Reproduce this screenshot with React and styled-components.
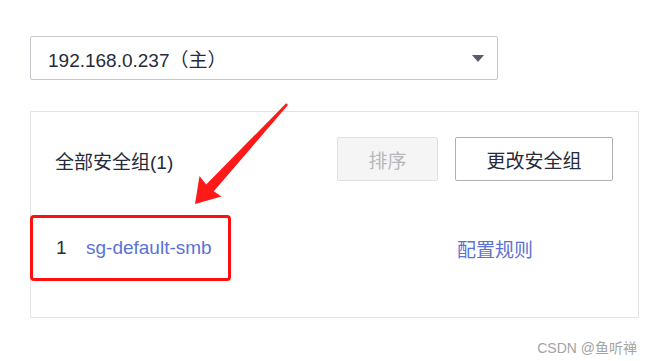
import React from 'react'
import styled, { createGlobalStyle } from 'styled-components'

const GlobalStyle = createGlobalStyle`
  body {
    margin: 0;
    background: #ffffff;
    font-family: "Liberation Sans", "Noto Sans CJK SC", sans-serif;
  }
`

const Page = styled.div`
  position: relative;
  width: 653px;
  height: 361px;
  box-sizing: border-box;
  padding: 36px 0 0 30px;
  overflow: hidden;
`

const Select = styled.div`
  width: 468px;
  height: 44px;
  box-sizing: border-box;
  border: 1px solid #c4c6cb;
  border-radius: 2px;
  display: flex;
  align-items: center;
  justify-content: space-between;
  padding: 0 13px 0 17px;
  font-size: 19px;
  color: #252b3a;
`

const Panel = styled.div`
  margin-top: 31px;
  width: 609px;
  height: 207px;
  box-sizing: border-box;
  border: 1px solid #e2e4e8;
`

const Header = styled.div`
  display: flex;
  align-items: center;
  gap: 17px;
  padding: 25px 25px 0 24px;
`

const Title = styled.div`
  flex: 1;
  font-size: 19px;
  color: #252b3a;
  padding-top: 2px;
`

const Button = styled.button`
  width: ${p => p.$w}px;
  height: 44px;
  box-sizing: border-box;
  border-radius: 2px;
  font-family: inherit;
  font-size: 19px;
  padding: 0;
  border: 1px solid ${p => (p.disabled ? '#dfe1e6' : '#adb0b8')};
  background: ${p => (p.disabled ? '#f5f5f6' : '#ffffff')};
  color: ${p => (p.disabled ? '#b6b8bd' : '#252b3a')};
`

const Row = styled.div`
  position: relative;
  margin-top: 34px;
  height: 66px;
  display: grid;
  grid-template-columns: 30px 371px auto;
  align-items: center;
  padding-left: 25px;
  font-size: 19px;
`

const Index = styled.span`
  color: #252b3a;
`

const Link = styled.span`
  color: #5a72d6;
`

const Highlight = styled.div`
  position: absolute;
  left: -1px;
  top: 0;
  width: 201px;
  height: 66px;
  box-sizing: border-box;
  border: 3px solid #ff1010;
  border-radius: 4px;
`

const Arrow = styled.svg`
  position: absolute;
  left: 0;
  top: 0;
  pointer-events: none;
`

const Footer = styled.div`
  margin-top: 19px;
  width: 607px;
  text-align: right;
  font-size: 14px;
  color: #a3a3a3;
`

export default function App() {
  return (
    <>
      <GlobalStyle />
      <Page>
        <Select>
          <span>192.168.0.237（主）</span>
          <svg width="12" height="7" viewBox="0 0 12 7">
            <path d="M0 0 L12 0 L6 7 Z" fill="#575d6c" />
          </svg>
        </Select>
        <Panel>
          <Header>
            <Title>全部安全组(1)</Title>
            <Button $w={101} disabled>排序</Button>
            <Button $w={158}>更改安全组</Button>
          </Header>
          <Row>
            <Index>1</Index>
            <Link>sg-default-smb</Link>
            <Link>配置规则</Link>
            <Highlight />
          </Row>
        </Panel>
        <Footer>CSDN @鱼听禅</Footer>
        <Arrow width="653" height="361" viewBox="0 0 653 361">
          <polygon
            points="288,105 213.8,191.2 221.5,196.5 195,204 199.5,176 206.2,184.4 286.2,103.2"
            fill="#ff1a1a"
          />
        </Arrow>
      </Page>
    </>
  )
}
